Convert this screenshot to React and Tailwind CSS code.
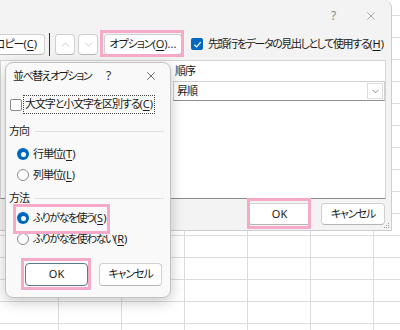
import React from 'react';
import { X, ChevronUp, ChevronDown } from 'lucide-react';

const font = "font-['Noto_Sans','Noto_Sans_CJK_JP',sans-serif] [font-feature-settings:'palt'] whitespace-nowrap tracking-[-1.1px]";

function Key({ children }) {
    return (
        <span className="tracking-normal">
            (<span className="underline underline-offset-2">{children}</span>)
        </span>
    );
}

function Radio({ checked }) {
    if (checked) {
        return (
            <span className="w-[12px] h-[12px] rounded-full bg-[#0067c0] flex items-center justify-center shrink-0">
                <span className="w-[5px] h-[5px] rounded-full bg-white" />
            </span>
        );
    }
    return <span className="w-[12px] h-[12px] rounded-full border border-[#8a8a8a] bg-white shrink-0" />;
}

function Btn({ children, className = '' }) {
    return (
        <div className={`shrink-0 bg-white border border-[#d0d0d0] border-b-[#b5b5b5] rounded-[4px] flex items-center justify-center text-[11px] text-[#1a1a1a] ${className}`}>
            {children}
        </div>
    );
}

function Pink({ className }) {
    return <div className={`absolute border-[3px] border-[#f4aac8] pointer-events-none ${className}`} />;
}

export default function App() {
    return (
        <div className={`relative w-[400px] h-[330px] overflow-hidden bg-white bg-[linear-gradient(to_right,#dcdcdc_1px,transparent_1px),linear-gradient(to_bottom,#dcdcdc_1px,transparent_1px)] bg-[size:63px_22px] bg-[position:58px_15px] text-[#1a1a1a] ${font}`}>
            {/* sort dialog */}
            <div className="relative w-[392px] h-[231px] bg-[#f3f3f3] border-r border-b border-[#cdcdcd] rounded-tr-lg flex flex-col">
                <div className="h-[31px] flex items-center justify-end shrink-0">
                    <span className="text-[12px] text-[#8a8a8a] mr-[29px]">?</span>
                    <X size={14} strokeWidth={1.2} className="text-[#8a8a8a] mr-[13px]" />
                </div>

                <div className="h-[26px] flex items-center shrink-0">
                    <Btn className="ml-[-70px] w-[115px] h-[21px] !justify-end pr-[7px]">
                        レベルのコピー<Key>C</Key>
                    </Btn>
                    <div className="shrink-0 ml-[4px] w-px h-[23px] bg-[#333]" />
                    <Btn className="ml-[5px] w-[20px] h-[21px]">
                        <ChevronUp size={13} strokeWidth={1.3} className="text-[#b8b8b8]" />
                    </Btn>
                    <Btn className="ml-[3px] w-[20px] h-[21px]">
                        <ChevronDown size={13} strokeWidth={1.3} className="text-[#b8b8b8]" />
                    </Btn>
                    <Btn className="ml-[6px] w-[78px] h-[21px]">
                        オプション<Key>O</Key><span className="tracking-normal">...</span>
                    </Btn>
                    <span className="shrink-0 ml-[9px] w-[12px] h-[12px] rounded-[2px] bg-[#0067c0] flex items-center justify-center">
                        <svg width="9" height="9" viewBox="0 0 10 10" fill="none">
                            <path d="M1.5 5.2 L4 7.6 L8.6 2.4" stroke="white" strokeWidth="1.4" />
                        </svg>
                    </span>
                    <span className="shrink-0 ml-[5px] text-[11px] tracking-[-1.4px]">
                        先頭行をデータの見出しとして使用する<Key>H</Key>
                    </span>
                </div>

                <div className="mt-[3px] w-[386px] h-[139px] bg-white border border-[#d3d3d3] border-b-[#8a8a8a] shrink-0">
                    <div className="h-[20px] flex items-center pl-[174px] text-[11px]">順序</div>
                    <div className="pl-[172px]">
                        <div className="w-[212px] h-[20px] border border-[#d0d0d0] border-b-[#8f8f8f] flex items-center justify-between pl-[3px] pr-[1px]">
                            <span className="text-[11px]">昇順</span>
                            <span className="w-[16px] h-[16px] border border-[#dcdcdc] bg-white flex items-center justify-center">
                                <ChevronDown size={11} strokeWidth={1.4} className="text-[#555]" />
                            </span>
                        </div>
                    </div>
                </div>

                <div className="mt-[4px] flex">
                    <Btn className="ml-[248px] w-[63px] h-[22px] tracking-normal">OK</Btn>
                    <Btn className="ml-[10px] w-[64px] h-[22px]">キャンセル</Btn>
                </div>

                <svg className="absolute right-[1px] bottom-[1px]" width="7" height="7" viewBox="0 0 7 7">
                    <rect x="5" y="1" width="1" height="1" fill="#999" />
                    <rect x="3" y="3" width="1" height="1" fill="#999" />
                    <rect x="5" y="3" width="1" height="1" fill="#999" />
                    <rect x="1" y="5" width="1" height="1" fill="#999" />
                    <rect x="3" y="5" width="1" height="1" fill="#999" />
                    <rect x="5" y="5" width="1" height="1" fill="#999" />
                </svg>
            </div>

            {/* sort options dialog */}
            <div className="absolute left-[5px] top-[62px] w-[166px] h-[236px] rounded-lg border border-[#c2c2c2] bg-[#f9f9f9] shadow-[0_4px_14px_rgba(0,0,0,0.22)] flex flex-col text-[11px]">
                <div className="h-[26px] flex items-center shrink-0 relative">
                    <span className="ml-[7px] tracking-[-1.5px]">並べ替えオプション</span>
                    <span className="absolute left-[100px] text-[12px] text-[#333]">?</span>
                    <X size={14} strokeWidth={1.2} className="absolute left-[138px] text-[#333]" />
                </div>

                <div className="mt-[6px] h-[19px] flex items-center pl-[4px]">
                    <span className="w-[12px] h-[12px] rounded-[2px] border border-[#8a8a8a] bg-white" />
                    <span className="ml-[1px] h-[19px] px-[1px] border border-dotted border-[#444] flex items-center">
                        大文字と小文字を区別する<Key>C</Key>
                    </span>
                </div>

                <div className="mt-[10px] h-[14px] flex items-center pl-[3px] pr-[6px]">
                    <span>方向</span>
                    <span className="ml-[6px] flex-1 h-px bg-[#e0e0e0]" />
                </div>
                <div className="mt-[8px] h-[16px] flex items-center pl-[11px] gap-[4px]">
                    <Radio checked />
                    <span>行単位<Key>T</Key></span>
                </div>
                <div className="mt-[5px] h-[16px] flex items-center pl-[11px] gap-[4px]">
                    <Radio />
                    <span>列単位<Key>L</Key></span>
                </div>

                <div className="mt-[8px] h-[14px] flex items-center pl-[3px] pr-[6px]">
                    <span>方法</span>
                    <span className="ml-[6px] flex-1 h-px bg-[#e0e0e0]" />
                </div>
                <div className="mt-[5px] h-[16px] flex items-center pl-[11px] gap-[4px]">
                    <Radio checked />
                    <span className="tracking-[-1.5px]">ふりがなを使う<Key>S</Key></span>
                </div>
                <div className="mt-[5px] h-[16px] flex items-center pl-[11px] gap-[4px]">
                    <Radio />
                    <span className="tracking-[-1.5px]">ふりがなを使わない<Key>R</Key></span>
                </div>

                <div className="mt-[16px] flex">
                    <Btn className="ml-[19px] w-[63px] h-[23px] !border-[#5f7790] tracking-normal">OK</Btn>
                    <Btn className="ml-[11px] w-[63px] h-[23px]">キャンセル</Btn>
                </div>
            </div>

            {/* highlight marks */}
            <Pink className="left-[100px] top-[30px] w-[84px] h-[27px]" />
            <Pink className="left-[247px] top-[198px] w-[64px] h-[31px]" />
            <Pink className="left-[13px] top-[204px] w-[97px] h-[30px]" />
            <Pink className="left-[21px] top-[258px] w-[70px] h-[32px]" />
        </div>
    );
}
